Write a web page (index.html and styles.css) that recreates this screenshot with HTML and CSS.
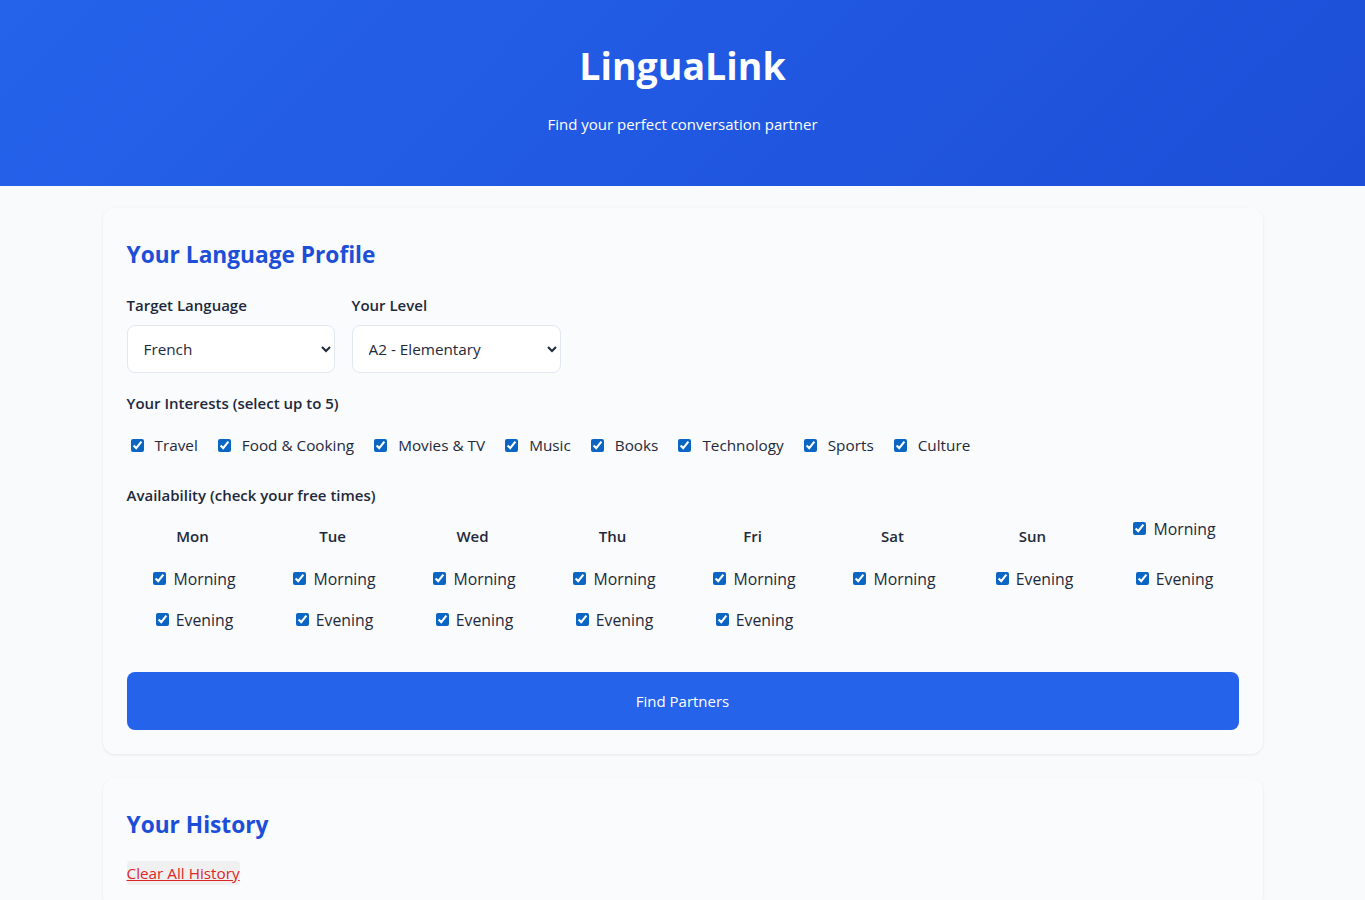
FILE: index.html
```html
<!DOCTYPE html>
<html lang="en">
<head>
  <meta charset="UTF-8">
  <title>LinguaLink</title>
  <link rel="stylesheet" href="styles.css">
</head>
<body>

<header class="hero">
  <h1>LinguaLink</h1>
  <p>Find your perfect conversation partner</p>
</header>

<main class="container">
  <section class="card">
    <h2>Your Language Profile</h2>

    <div class="field-row">
      <div class="field">
        <label for="language">Target Language</label>
        <select id="language" class="select-lang">
          <option>French</option>
          <option>Spanish</option>
          <option>German</option>
        </select>
      </div>
      <div class="field">
        <label for="level">Your Level</label>
        <select id="level" class="select-level">
          <option>A1 - Beginner</option>
          <option selected>A2 - Elementary</option>
          <option>B1 - Intermediate</option>
        </select>
      </div>
    </div>

    <p class="group-label interests-label">Your Interests (select up to 5)</p>
    <div class="interests">
      <label><input type="checkbox" checked> Travel</label>
      <label><input type="checkbox" checked> Food &amp; Cooking</label>
      <label><input type="checkbox" checked> Movies &amp; TV</label>
      <label><input type="checkbox" checked> Music</label>
      <label><input type="checkbox" checked> Books</label>
      <label><input type="checkbox" checked> Technology</label>
      <label><input type="checkbox" checked> Sports</label>
      <label><input type="checkbox" checked> Culture</label>
    </div>

    <p class="group-label">Availability (check your free times)</p>
    <div class="schedule">
      <div class="day">Mon</div>
      <div class="day">Tue</div>
      <div class="day">Wed</div>
      <div class="day">Thu</div>
      <div class="day">Fri</div>
      <div class="day">Sat</div>
      <div class="day">Sun</div>
      <label class="slot"><input type="checkbox" checked> Morning</label>
      <label class="slot"><input type="checkbox" checked> Morning</label>
      <label class="slot"><input type="checkbox" checked> Morning</label>
      <label class="slot"><input type="checkbox" checked> Morning</label>
      <label class="slot"><input type="checkbox" checked> Morning</label>
      <label class="slot"><input type="checkbox" checked> Morning</label>
      <label class="slot"><input type="checkbox" checked> Morning</label>
      <label class="slot"><input type="checkbox" checked> Evening</label>
      <label class="slot"><input type="checkbox" checked> Evening</label>
      <label class="slot"><input type="checkbox" checked> Evening</label>
      <label class="slot"><input type="checkbox" checked> Evening</label>
      <label class="slot"><input type="checkbox" checked> Evening</label>
      <label class="slot"><input type="checkbox" checked> Evening</label>
      <label class="slot"><input type="checkbox" checked> Evening</label>
    </div>

    <button class="btn-primary">Find Partners</button>
  </section>

  <section class="card history">
    <h2>Your History</h2>
    <button class="btn-clear">Clear All History</button>
  </section>
</main>

</body>
</html>
```

FILE: styles.css
```css
body {
  margin: 0;
  padding: 0;
  background: #f8fafc;
  font-family: 'Open Sans', 'Noto Sans', sans-serif;
  color: #1e293b;
}

.hero {
  background: linear-gradient(135deg, #2563eb, #1d4ed8);
  color: white;
  text-align: center;
  height: 186px;
  box-sizing: border-box;
  padding-top: 40px;
}

.hero h1 {
  margin: 0;
  font-size: 37.5px;
  line-height: 52px;
  font-weight: 700;
}

.hero p {
  margin: 22px 0 0;
  font-size: 15px;
}

.container {
  max-width: 1160px;
  margin: 0 auto;
  padding: 22px 0;
}

.card {
  background: #f9fbfd;
  border-radius: 12px;
  box-shadow: 0 1px 3px rgba(0, 0, 0, 0.08);
  padding: 24px;
  margin-bottom: 24px;
}

.card h2 {
  margin: 8px 0 25px;
  color: #1d4ed8;
  font-size: 22.7px;
  line-height: 30px;
  font-weight: 700;
}

.history h2 {
  margin-bottom: 21px;
}

.field-row {
  display: flex;
  gap: 17px;
}

.field label {
  display: block;
  font-size: 15px;
  font-weight: 600;
  line-height: 20px;
  margin-bottom: 10px;
}

select {
  height: 48px;
  padding: 0 12px;
  font-family: inherit;
  font-size: 15.3px;
  color: #1e293b;
  background: white;
  border: 1px solid #e2e8f0;
  border-radius: 8px;
}

.select-lang {
  width: 208px;
}

.select-level {
  width: 209px;
}

.group-label {
  margin: 20px 0 8px;
  font-size: 15px;
  font-weight: 600;
  line-height: 20px;
}

.interests-label {
  margin-bottom: 22px;
}

.interests {
  display: flex;
  flex-wrap: wrap;
  gap: 16px;
  font-size: 15.3px;
  margin-bottom: 30px;
}

.interests label {
  display: flex;
  align-items: center;
  gap: 8px;
}

.schedule {
  display: grid;
  grid-template-columns: repeat(8, 1fr);
  gap: 8px;
  align-items: start;
  text-align: center;
  margin-bottom: 35px;
}

.day {
  font-weight: 600;
  font-size: 15px;
  line-height: 21px;
  padding: 13px 0 8px;
}

.slot {
  font-size: 15.8px;
  font-weight: 500;
  line-height: 21px;
  padding: 6px 0;
}

input[type="checkbox"] {
  accent-color: #0a66c2;
}

.btn-primary {
  display: block;
  width: 100%;
  height: 58px;
  border: none;
  border-radius: 8px;
  background: #2563eb;
  color: white;
  font-family: inherit;
  font-size: 15px;
}

.btn-clear {
  padding: 2px 0;
  border: none;
  border-radius: 4px;
  background: #f0f0f0;
  color: #dc2626;
  text-decoration: underline;
  font-family: inherit;
  font-size: 15.3px;
}
```
